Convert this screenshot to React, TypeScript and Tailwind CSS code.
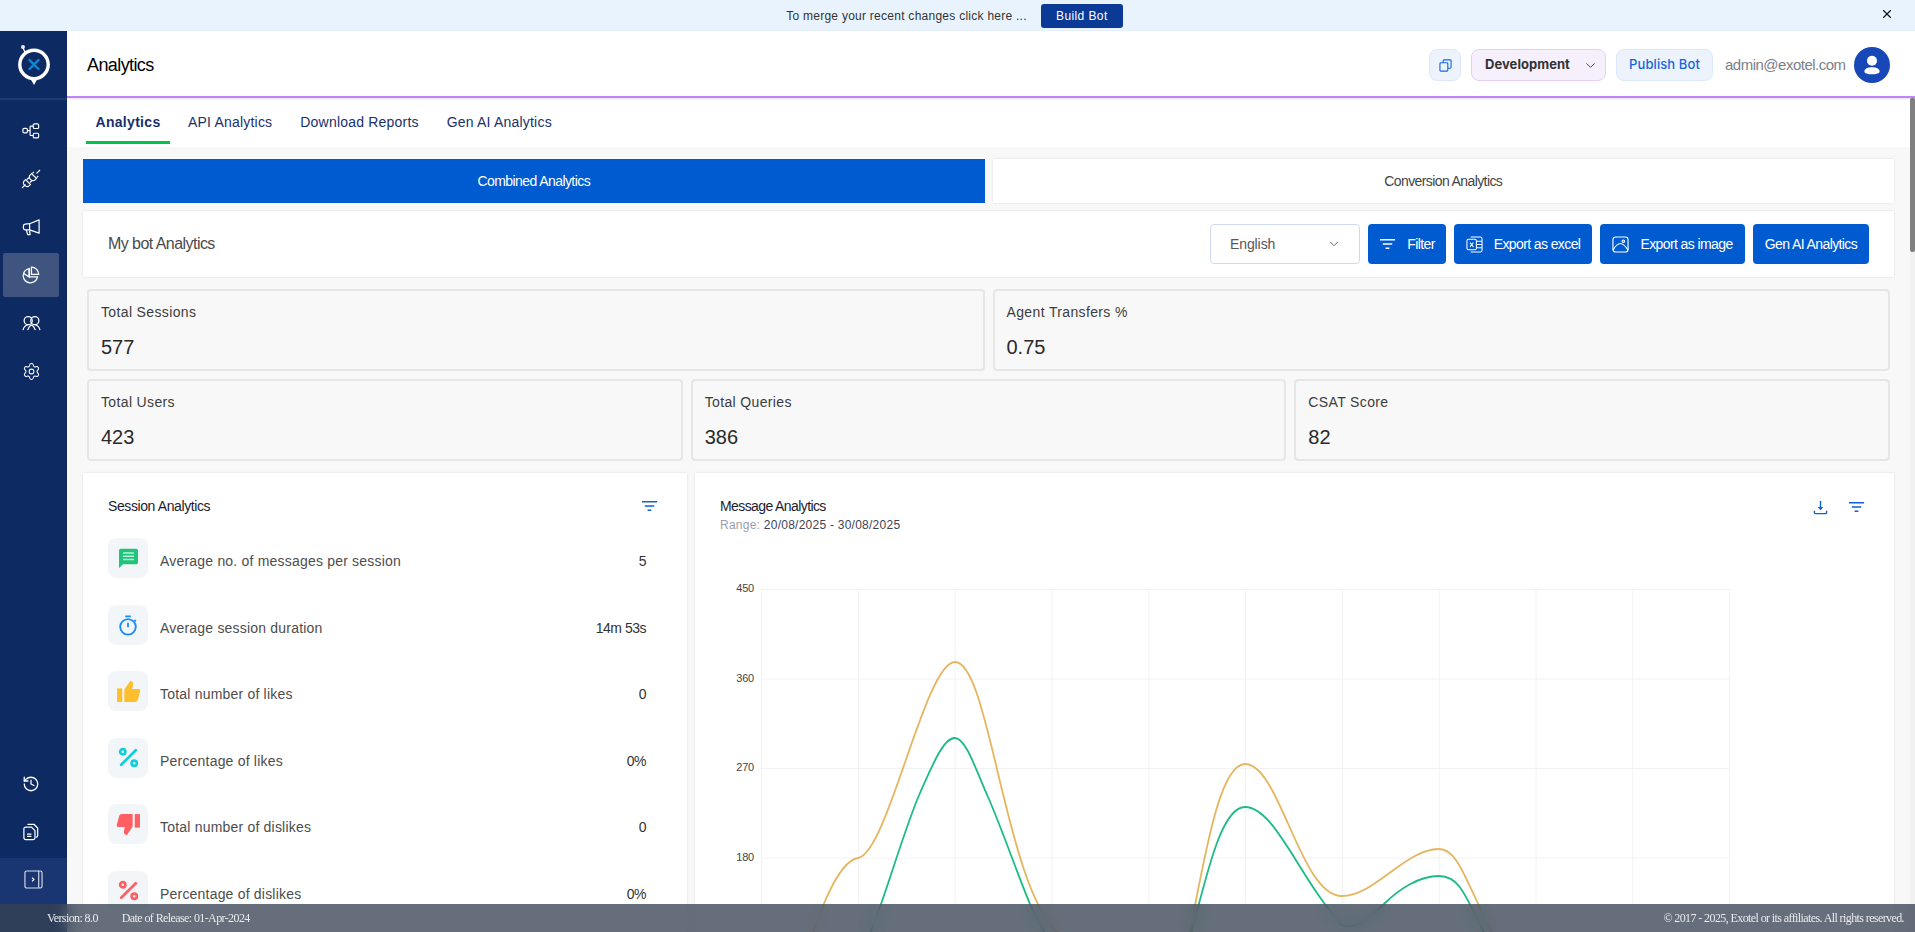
import React from "react";
import { ChevronDown, X, Settings, History, Percent } from "lucide-react";

const FONT = "font-['Liberation_Sans','Arial',sans-serif]";
const INTER = "font-['Inter',sans-serif]";

function smooth(pts: number[][]) {
  let d = `M${pts[0][0]} ${pts[0][1]}`;
  for (let i = 0; i < pts.length - 1; i++) {
    const p0 = pts[Math.max(i - 1, 0)];
    const p1 = pts[i];
    const p2 = pts[i + 1];
    const p3 = pts[Math.min(i + 2, pts.length - 1)];
    const c1x = p1[0] + (p2[0] - p0[0]) / 6;
    const c1y = p1[1] + (p2[1] - p0[1]) / 6;
    const c2x = p2[0] - (p3[0] - p1[0]) / 6;
    const c2y = p2[1] - (p3[1] - p1[1]) / 6;
    d += ` C${c1x.toFixed(1)} ${c1y.toFixed(1)} ${c2x.toFixed(1)} ${c2y.toFixed(1)} ${p2[0]} ${p2[1]}`;
  }
  return d;
}

const orangeAd = "M790 1000 C805 960 830 862 858 858 C888 853 925 662 955 662 C990 662 1005 890 1060 935";
const greenAd = smooth([[858, 965], [881, 904], [920, 793], [955, 738], [988, 797], [1030, 904], [1052, 945]]);
const orangeBd = "M1175 990 C1195 940 1210 764 1245 764 C1280 764 1300 896 1342 896 C1375 896 1405 849 1439 849 C1462 849 1468 895 1510 965";
const greenBd = "M1180 970 C1200 915 1215 807 1245 807 C1275 807 1300 880 1342 925 C1355 930 1370 918 1384 904 C1400 888 1420 876 1439 876 C1460 876 1465 895 1490 945";

function FilterLines({ className }: { className?: string }) {
  return (
    <svg viewBox="0 0 18 12" className={className} fill="none" stroke="currentColor" strokeWidth="1.5">
      <path d="M1 1.500h16M4 6h10M7 10.500h4" />
    </svg>
  );
}

function Logo() {
  return (
    <svg viewBox="0 0 40 46" className="w-[40px] h-[46px]">
      <circle cx="9" cy="4" r="2" fill="#fff" opacity="0.9" />
      <path d="M9 5l3 6" stroke="#fff" strokeWidth="1.200" />
      <circle cx="20" cy="21.500" r="14.200" fill="#0d2a63" stroke="#fff" strokeWidth="3.400" />
      <path d="M16 35h8l-4 7z" fill="#fff" />
      <path d="M15.500 17l9 9M24.500 17l-9 9" stroke="#0b8bd6" strokeWidth="2.400" strokeLinecap="round" />
    </svg>
  );
}

function SideIcon({ children, active }: { children: React.ReactNode; active?: boolean }) {
  return (
    <div className={`mx-[3px] h-[44px] w-[56px] mb-[4px] rounded-[2px] flex items-center justify-center text-white ${active ? "bg-[#3f547f]" : ""}`}>
      {children}
    </div>
  );
}

function FlowIcon() {
  return (
    <svg viewBox="0 0 20 20" className="w-[18px] h-[18px]" fill="none" stroke="currentColor" strokeWidth="1.300">
      <rect x="1" y="7" width="5" height="5" rx="1.400" />
      <rect x="12.500" y="2" width="6" height="5.200" rx="1.400" />
      <rect x="12.500" y="12.500" width="6" height="5.200" rx="1.400" />
      <path d="M6 9.500h3M9 4.600h3.500M9 15h3.500M9 4.600v10.400" />
    </svg>
  );
}

function PlugIcon() {
  return (
    <svg viewBox="0 0 20 20" className="w-[20px] h-[20px]" fill="none" stroke="currentColor" strokeWidth="1.100">
      <path d="M1 19l3.500-3.500M19 1l-3.500 3.500" />
      <path d="M4.500 10.500l5 5-1.500 1.300a2.800 2.800 0 0 1-4-.1l-.7-.7a2.800 2.800 0 0 1-.1-4z" />
      <path d="M10.500 4.500l5 5-1.500 1.300a2.800 2.800 0 0 1-4 0l-.8-.8a2.800 2.800 0 0 1 0-4z" />
      <path d="M8 8.500l-2 2M11 11.500l-2 2M13 2.800l-1.600 1.600M17.200 7l-1.600 1.600" />
    </svg>
  );
}

function MegaphoneIcon() {
  return (
    <svg viewBox="0 0 20 20" className="w-[19px] h-[19px]" fill="none" stroke="currentColor" strokeWidth="1.300" strokeLinejoin="round">
      <path d="M18 2v14L8 12.500H3.500a2 2 0 0 1-2-2v-2a2 2 0 0 1 1.800-2L8 6z" />
      <path d="M8 6v6.500M4.500 12.500L6 17.500h2.500L8 13" />
    </svg>
  );
}

function PieIcon() {
  return (
    <svg viewBox="0 0 20 20" className="w-[18px] h-[18px]" fill="none" stroke="currentColor" strokeWidth="1.400">
      <path d="M8 2.800a8 8 0 1 0 9.200 9.200H8z" />
      <path d="M11 1a8 8 0 0 1 8 8h-8z" transform="translate(-0.500 0.200)" />
      <path d="M8 3v9L2 8.500" />
    </svg>
  );
}

function UsersIcon() {
  return (
    <svg viewBox="0 0 20 18" className="w-[19px] h-[17px]" fill="none" stroke="currentColor" strokeWidth="1.300">
      <circle cx="6.500" cy="6" r="4.300" />
      <circle cx="13.500" cy="6" r="4.300" />
      <path d="M1 16c.6-3 2.400-5 5-5.400M19 16c-.6-3-2.400-5-5-5.400M6 16c1-3 2.300-4.800 4-5.400 1.700.6 3 2.400 4 5.400" />
    </svg>
  );
}

function DocsIcon() {
  return (
    <svg viewBox="0 0 18 20" className="w-[16px] h-[18px]" fill="none" stroke="currentColor" strokeWidth="1.400">
      <path d="M5 1.500h7.500l4 4V14a2 2 0 0 1-2 2" />
      <path d="M3 4.500h6.500l4 4V16.500a2 2 0 0 1-2 2H3a2 2 0 0 1-2-2v-10a2 2 0 0 1 2-2z" />
      <path d="M4.500 12.500h5M4.500 15h5" />
    </svg>
  );
}

function PanelIcon() {
  return (
    <svg viewBox="0 0 20 20" className="w-[19px] h-[19px]" fill="none" stroke="#d8deea" strokeWidth="1.200">
      <rect x="1" y="1" width="18" height="18" rx="2" />
      <path d="M15.500 1v18" />
      <path d="M8.500 8l2 2-2 2" stroke="#fff" />
    </svg>
  );
}

function Sidebar() {
  return (
    <aside className="w-[67px] shrink-0 bg-[#0d2a63] flex flex-col">
      <div className="h-[69px] border-b-2 border-[#1d3a72] flex items-center justify-center pt-[2px]">
        <Logo />
      </div>
      <div className="pt-[9px] flex flex-col">
        <SideIcon><FlowIcon /></SideIcon>
        <SideIcon><PlugIcon /></SideIcon>
        <SideIcon><MegaphoneIcon /></SideIcon>
        <SideIcon active><PieIcon /></SideIcon>
        <SideIcon><UsersIcon /></SideIcon>
        <SideIcon><Settings size={19} strokeWidth={1.300} /></SideIcon>
      </div>
      <div className="mt-auto">
        <SideIcon><History size={18} strokeWidth={1.700} /></SideIcon>
        <SideIcon><DocsIcon /></SideIcon>
        <div className="h-[74px] bg-[#1a3672] flex justify-center pt-[12px] mt-[1px]">
          <PanelIcon />
        </div>
      </div>
    </aside>
  );
}

function Header() {
  return (
    <header className="h-[67px] shrink-0 bg-white border-b-2 border-[#c084f5] flex items-center pl-[20px] pr-[25px] pt-[3px] shadow-[0_1px_2px_rgba(0,0,0,0.12)] relative">
      <h1 className="text-[18px] tracking-[-0.6px] text-black">Analytics</h1>
      <div className="ml-auto flex items-center">
        <button className="w-[32px] h-[32px] rounded-[8px] bg-[#edf3fd] border border-[#dde8fa] flex items-center justify-center text-[#1265e0]">
          <svg viewBox="0 0 14 14" className="w-[13px] h-[13px]" fill="none" stroke="currentColor" strokeWidth="1.200">
            <rect x="1" y="4" width="8.500" height="9" rx="1" />
            <path d="M4.500 4V2a1 1 0 0 1 1-1H12a1 1 0 0 1 1 1v7a1 1 0 0 1-1 1H9.500" />
          </svg>
        </button>
        <div className={`${INTER} ml-[10px] w-[135px] h-[32px] rounded-[8px] bg-[#f6effc] border border-[#e6cff7] flex items-center pl-[13px] pr-[7px] text-[13px] font-bold tracking-[0.05px] text-[#333]`}>
          Development
          <ChevronDown size={15} strokeWidth={1.400} className="ml-auto" />
        </div>
        <button className={`${INTER} ml-[10px] w-[97px] h-[32px] rounded-[8px] bg-[#edf3fd] border border-[#dde8fa] text-[13px] font-medium tracking-[0.1px] text-[#1265e0]`}>
          Publish Bot
        </button>
        <span className="ml-[12px] w-[119px] text-[15px] tracking-[-0.5px] text-[#7c7f87] whitespace-nowrap">admin@exotel.com</span>
        <div className="ml-[10px] w-[36px] h-[36px] rounded-full bg-[#1847b8] flex items-center justify-center overflow-hidden">
          <svg viewBox="0 0 24 24" className="w-[28px] h-[28px]" fill="#fff">
            <circle cx="12" cy="8.300" r="4.300" />
            <path d="M5.500 17.500c0-2.200 3-3.500 6.500-3.500s6.500 1.300 6.500 3.500c0 1.500-3 2.500-6.500 2.500s-6.500-1-6.500-2.500z" />
          </svg>
        </div>
      </div>
    </header>
  );
}

function Tabs() {
  const items = ["API Analytics", "Download Reports", "Gen AI Analytics"];
  return (
    <div className="h-[49px] bg-white flex pl-[19px] text-[14px] tracking-[0.2px] text-[#1a2f6b]">
      <div className="w-[84px] border-b-[3px] border-[#00c24e] font-bold tracking-[0.3px] flex items-center justify-center h-[46px] pt-[5px]">Analytics</div>
      <div className="flex items-center h-[46px] ml-[18px] gap-[28px] pt-[2px]">
        {items.map((t) => <span key={t}>{t}</span>)}
      </div>
    </div>
  );
}

function ActionButton({ icon, label, w }: { icon?: React.ReactNode; label: string; w: string }) {
  return (
    <button className={`${w} h-[40px] rounded-[4px] bg-[#005bd1] text-white text-[14px] tracking-[-0.6px] flex items-center justify-center gap-[11px]`}>
      {icon}
      {label}
    </button>
  );
}

function ExcelIcon() {
  return (
    <svg viewBox="0 0 18 18" className="w-[17px] h-[17px]" fill="none" stroke="#fff" strokeWidth="1.100">
      <rect x="1" y="3.500" width="10" height="11" rx="1.500" />
      <path d="M5 1h10a2 2 0 0 1 2 2v12a2 2 0 0 1-2 2H5M11 5.500h6M11 9h6M11 12.500h6M4.200 7l3.600 4.500M7.800 7l-3.600 4.500" />
    </svg>
  );
}

function ImageIcon() {
  return (
    <svg viewBox="0 0 18 18" className="w-[17px] h-[17px]" fill="none" stroke="#fff" strokeWidth="1.200">
      <rect x="1" y="1" width="16" height="16" rx="3" />
      <circle cx="12" cy="5.500" r="1.300" />
      <path d="M1 15c3-5 6-7 8-7 3 0 6 4 8 7" />
    </svg>
  );
}

function Stat({ title, value }: { title: string; value: string }) {
  return (
    <div className="flex-1 h-[82px] rounded-[4px] bg-[#f8f8f8] border-2 border-[#e6e6e6] pl-[12px] pt-[11px]">
      <div className="text-[14px] leading-[20px] tracking-[0.36px] text-[#3c3c3c]">{title}</div>
      <div className="mt-[12px] text-[20px] leading-[26px] text-[#2a2a2a]">{value}</div>
    </div>
  );
}

function SpeechIcon() {
  return (
    <svg viewBox="0 0 22 22" className="w-[22px] h-[22px]">
      <path d="M2 3.500C2 2.500 2.800 1.700 3.800 1.700h15.400c1 0 1.800.8 1.800 1.800v12c0 1-.8 1.800-1.800 1.800H6l-4 4z" fill="#1fc47d" />
      <path d="M6 6h11M6 9.300h11M6 12.600h11" stroke="#bdf0d8" strokeWidth="1.500" />
    </svg>
  );
}

function TimerIcon() {
  return (
    <svg viewBox="0 0 24 24" className="w-[22px] h-[22px]" fill="none" stroke="#1a8cff" strokeWidth="2">
      <circle cx="12" cy="14" r="8.500" />
      <path d="M9 2.500h6M12 9.500v5M19 6.500l1.500 1.500" />
    </svg>
  );
}

function ThumbIcon({ color, down }: { color: string; down?: boolean }) {
  return (
    <svg viewBox="0 0 24 24" className={`w-[25px] h-[25px] ${down ? "rotate-180" : ""}`} fill={color}>
      <rect x="1" y="9" width="5" height="13" />
      <path d="M8 22V10l5.500-8c1.800 0 3 1.200 3 3l-1 4.500H22c1 .2 1.500 1 1.300 2l-2.300 8.500c-.4 1.200-1.200 2-2.500 2z" />
    </svg>
  );
}

function PercentIcon({ color }: { color: string }) {
  return <Percent size={25} strokeWidth={2.600} color={color} />;
}

const rows: { label: string; value: string; icon: React.ReactNode }[] = [
  { label: "Average no. of messages per session", value: "5", icon: <SpeechIcon /> },
  { label: "Average session duration", value: "14m 53s", icon: <TimerIcon /> },
  { label: "Total number of likes", value: "0", icon: <ThumbIcon color="#ffbe2e" /> },
  { label: "Percentage of likes", value: "0%", icon: <PercentIcon color="#12cde0" /> },
  { label: "Total number of dislikes", value: "0", icon: <ThumbIcon color="#ff5f63" down /> },
  { label: "Percentage of dislikes", value: "0%", icon: <PercentIcon color="#ff5f63" /> },
];

function SessionPanel() {
  return (
    <section className="w-[604px] shrink-0 bg-white shadow-[0_0_2px_rgba(0,0,0,0.12)] pl-[25px] pr-[41px] pt-[24px] h-[520px]">
      <div className="flex items-center justify-between h-[18px]">
        <h2 className="text-[14px] tracking-[-0.4px] text-[#1c1c30]">Session Analytics</h2>
        <FilterLines className="w-[17px] h-[12px] text-[#0f62d6] -mr-[12px]" />
      </div>
      <div className="mt-[23px] flex flex-col gap-[26.500px]">
        {rows.map((r) => (
          <div key={r.label} className="flex h-[40px]">
            <div className="w-[40px] h-[40px] rounded-[8px] bg-[#f3f6f9] flex items-center justify-center">{r.icon}</div>
            <span className="ml-[12px] mt-[13px] text-[14px] leading-[20px] tracking-[0.2px] text-[#4d4d4d]">{r.label}</span>
            <span className="ml-auto mt-[13px] text-[14px] leading-[20px] tracking-[-0.5px] text-[#333]">{r.value}</span>
          </div>
        ))}
      </div>
    </section>
  );
}

function Chart() {
  const xs = Array.from({ length: 11 }, (_, i) => 761.6 + i * 96.8);
  const ys = [589.500, 679, 768.500, 858];
  const labels = ["450", "360", "270", "180"];
  return (
    <svg viewBox="695 558 1199 400" className="w-[1199px] h-[400px] block">
      {xs.map((x) => <line key={x} x1={x} x2={x} y1={589} y2={958} stroke="#f2f2f3" strokeWidth="1" />)}
      {ys.map((y) => <line key={y} x1={761} x2={1730} y1={y} y2={y} stroke="#f2f2f3" strokeWidth="1" />)}
      {ys.map((y, i) => (
        <text key={y} x={754} y={y + 2.500} textAnchor="end" fontSize="11" letterSpacing="-0.2" fill="#444" fontFamily="Liberation Sans, sans-serif">{labels[i]}</text>
      ))}
      <path d={orangeAd} fill="none" stroke="#e6b55f" strokeWidth="1.800" />
      <path d={orangeBd} fill="none" stroke="#e6b55f" strokeWidth="1.800" />
      <path d={greenAd} fill="none" stroke="#1dbb85" strokeWidth="1.800" />
      <path d={greenBd} fill="none" stroke="#1dbb85" strokeWidth="1.800" />
    </svg>
  );
}

function MessagePanel() {
  return (
    <section className="flex-1 bg-white shadow-[0_0_2px_rgba(0,0,0,0.12)] h-[520px] overflow-hidden">
      <div className="h-[85px] pl-[25px] pr-[29px] pt-[23px] flex justify-between">
        <div>
          <h2 className="text-[14px] leading-[20px] tracking-[-0.6px] text-[#1c1c30]">Message Analytics</h2>
          <div className="text-[12px] leading-[16px] mt-[1px] tracking-[0.25px] text-[#3d4354]"><span className="text-[#9a9db0]">Range:</span> 20/08/2025 - 30/08/2025</div>
        </div>
        <div className="flex gap-[20px] text-[#0f62d6] items-start pt-[4px]">
          <svg viewBox="0 0 16 16" className="w-[15px] h-[15px]" fill="none" stroke="currentColor" strokeWidth="1.500">
            <path d="M8 1v8" /><path d="M5 7.500h6L8 11z" fill="currentColor" stroke="none" /><path d="M1.500 11.500v2c0 .6.400 1 1 1h11c.6 0 1-.4 1-1v-2" />
          </svg>
          <FilterLines className="w-[17px] h-[12px] mt-[1px]" />
        </div>
      </div>
      <Chart />
    </section>
  );
}

export default function App() {
  return (
    <div className={`relative h-screen w-full overflow-hidden flex flex-col bg-white ${FONT}`}>
      <div className="h-[31px] shrink-0 bg-[#e8f3fd] flex items-center justify-center relative pr-[6px]">
        <span className="text-[12px] tracking-[0.26px] text-[#333]">To merge your recent changes click here ...</span>
        <button className="ml-[14px] w-[82px] h-[24px] rounded-[3px] bg-[#0b3a96] text-white text-[12px] tracking-[0.4px]">Build Bot</button>
        <X size={14} strokeWidth={2} className="absolute right-[21px] top-[7px] text-[#111]" />
      </div>
      <div className="flex-1 flex min-h-0">
        <Sidebar />
        <div className="flex-1 flex flex-col min-w-0">
          <Header />
          <div className="flex-1 flex min-h-0">
            <main className="flex-1 min-w-0 overflow-hidden bg-[#f8f8f8]">
              <Tabs />
              <div className="pl-[16px] pr-[16px] pt-[12px]">
                <div className="flex gap-[8px] h-[44px]">
                  <div className="flex-1 bg-[#005bd1] text-white text-[14px] tracking-[-0.57px] flex items-center justify-center">Combined Analytics</div>
                  <div className="flex-1 bg-white shadow-[0_0_2px_rgba(0,0,0,0.12)] text-[#444] text-[14px] tracking-[-0.6px] flex items-center justify-center">Conversion Analytics</div>
                </div>
                <div className="mt-[8px] h-[66px] bg-white shadow-[0_0_2px_rgba(0,0,0,0.12)] flex items-center pl-[25px] pr-[25px]">
                  <h2 className="text-[16px] tracking-[-0.55px] text-[#4a4a4a]">My bot Analytics</h2>
                  <div className="ml-auto flex gap-[8px]">
                    <div className="w-[150px] h-[40px] rounded-[4px] bg-white border border-[#cfd9f2] flex items-center pl-[19px] pr-[18px] text-[14px] tracking-[-0.1px] text-[#555]">
                      English
                      <ChevronDown size={14} strokeWidth={1.500} className="ml-auto" />
                    </div>
                    <ActionButton w="w-[78px]" label="Filter" icon={<FilterLines className="w-[17px] h-[12px]" />} />
                    <ActionButton w="w-[138px]" label="Export as excel" icon={<ExcelIcon />} />
                    <ActionButton w="w-[145px]" label="Export as image" icon={<ImageIcon />} />
                    <ActionButton w="w-[116px]" label="Gen AI Analytics" />
                  </div>
                </div>
                <div className="px-[4px] mt-[12px] flex flex-col gap-[8px]">
                  <div className="flex gap-[8px]">
                    <Stat title="Total Sessions" value="577" />
                    <Stat title="Agent Transfers %" value="0.75" />
                  </div>
                  <div className="flex gap-[8px]">
                    <Stat title="Total Users" value="423" />
                    <Stat title="Total Queries" value="386" />
                    <Stat title="CSAT Score" value="82" />
                  </div>
                </div>
                <div className="mt-[12px] flex gap-[8px]">
                  <SessionPanel />
                  <MessagePanel />
                </div>
              </div>
            </main>
            <div className="w-[5px] shrink-0 bg-[#f1f1f1]">
              <div className="h-[154px] bg-[#808080] rounded-[2px]" />
            </div>
          </div>
        </div>
      </div>
      <footer className="absolute left-0 right-0 bottom-0 h-[28px] bg-[#354050]/[0.76] backdrop-blur-sm flex items-center pl-[47px] pr-[11px] font-['Liberation_Serif',serif] text-[12px] tracking-[-0.6px] text-[#e8eaee]">
        <span>Version: 8.0</span>
        <span className="ml-[24px]">Date of Release: 01-Apr-2024</span>
        <span className="ml-auto">© 2017 - 2025, Exotel or its affiliates. All rights reserved.</span>
      </footer>
    </div>
  );
}
